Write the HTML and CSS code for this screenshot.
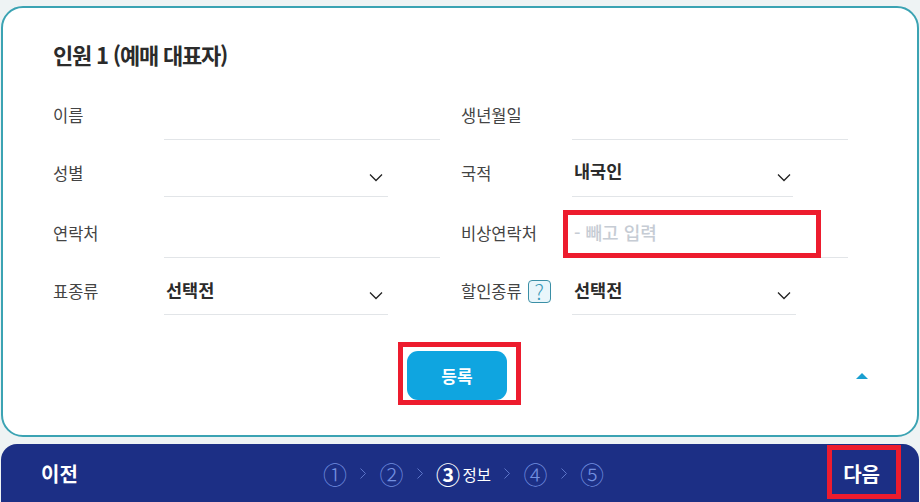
FILE: index.html
```html
<!DOCTYPE html>
<html lang="ko">
    <head>
        <meta charset="utf-8">
        <title>인원 정보</title>
        <link rel="stylesheet" href="styles.css">
    </head>
    <body>
        <div class="page">
            <div class="card">
                <h2 class="card-title">인원 1 (예매 대표자)</h2>

                <div class="row row-first">
                    <div class="cell">
                        <span class="label">이름</span>
                        <div class="field"></div>
                    </div>
                    <div class="cell">
                        <span class="label">생년월일</span>
                        <div class="field"></div>
                    </div>
                </div>

                <div class="row">
                    <div class="cell">
                        <span class="label">성별</span>
                        <div class="field select select-a">
                            <svg class="chevron" viewBox="0 0 14 9"><path d="M1 1.5l6 6 6-6"/></svg>
                        </div>
                    </div>
                    <div class="cell">
                        <span class="label">국적</span>
                        <div class="field select select-b">
                            <span class="value">내국인</span>
                            <svg class="chevron" viewBox="0 0 14 9"><path d="M1 1.5l6 6 6-6"/></svg>
                        </div>
                    </div>
                </div>

                <div class="row row-tall">
                    <div class="cell">
                        <span class="label">연락처</span>
                        <div class="field"></div>
                    </div>
                    <div class="cell">
                        <span class="label">비상연락처</span>
                        <div class="field"><span class="placeholder">- 빼고 입력</span></div>
                    </div>
                </div>

                <div class="row">
                    <div class="cell">
                        <span class="label">표종류</span>
                        <div class="field select select-a">
                            <span class="value">선택전</span>
                            <svg class="chevron" viewBox="0 0 14 9"><path d="M1 1.5l6 6 6-6"/></svg>
                        </div>
                    </div>
                    <div class="cell">
                        <span class="label">할인종류<span class="help">?</span></span>
                        <div class="field select select-c">
                            <span class="value">선택전</span>
                            <svg class="chevron" viewBox="0 0 14 9"><path d="M1 1.5l6 6 6-6"/></svg>
                        </div>
                    </div>
                </div>

                <div class="actions">
                    <button class="submit">등록</button>
                    <span class="collapse"></span>
                </div>
            </div>

            <div class="bar">
                <span class="bar-link">이전</span>
                <div class="steps">
                    <span class="step">①</span>
                    <svg class="sep" viewBox="0 0 6 11"><path d="M.5.5l5 5-5 5"/></svg>
                    <span class="step">②</span>
                    <svg class="sep" viewBox="0 0 6 11"><path d="M.5.5l5 5-5 5"/></svg>
                    <span class="step active">③</span>
                    <span class="step-name">정보</span>
                    <svg class="sep" viewBox="0 0 6 11"><path d="M.5.5l5 5-5 5"/></svg>
                    <span class="step">④</span>
                    <svg class="sep" viewBox="0 0 6 11"><path d="M.5.5l5 5-5 5"/></svg>
                    <span class="step">⑤</span>
                </div>
                <span class="bar-link">다음</span>
            </div>

            <div class="mark mark-phone"></div>
            <div class="mark mark-submit"></div>
            <div class="mark mark-next"></div>
        </div>
    </body>
</html>
```

FILE: styles.css
```css
* {
    margin: 0;
    padding: 0;
    box-sizing: border-box;
    font-family: "Noto Sans CJK KR", "Noto Sans", sans-serif;
}

body {
    background: #eef3f4;
    overflow: hidden;
}

.page {
    position: relative;
    width: 920px;
    height: 502px;
    padding: 6px 1px 0;
}

.card {
    height: 431px;
    padding: 28px 50px 0;
    background: white;
    border: 2px solid #3ba3b3;
    border-radius: 22px;
}

.card-title {
    height: 36px;
    margin-bottom: 11px;
    font-size: 22px;
    line-height: 36px;
    font-weight: 700;
    letter-spacing: -1.2px;
    color: #2b2b2b;
}

.row {
    display: flex;
    gap: 21px;
    height: 57px;
}

.row-tall {
    height: 61px;
}

.cell {
    display: flex;
    align-items: stretch;
    width: 387px;
}

.label {
    display: flex;
    align-items: center;
    align-self: flex-end;
    width: 111px;
    height: 24px;
    margin-bottom: 12px;
    font-size: 16.5px;
    color: #444;
}

.row-first .label {
    margin-bottom: 13px;
}

.row-tall .label {
    margin-bottom: 13px;
}

.help {
    display: flex;
    align-items: center;
    justify-content: center;
    flex: none;
    width: 23px;
    height: 23px;
    margin-left: 6px;
    font-size: 21px;
    font-weight: 300;
    color: #3a9ab8;
    background: #e9f6fb;
    border: 1px solid #3b8fa6;
    border-radius: 4px;
}

.field {
    position: relative;
    width: 276px;
    border-bottom: 1px solid #e2e5e8;
}

.select-a {
    width: 224px;
}

.select-b {
    width: 221px;
}

.select-c {
    width: 224px;
}

.value {
    position: absolute;
    left: 2px;
    bottom: 11px;
    font-size: 17.5px;
    line-height: 26px;
    font-weight: 700;
    color: #2b2b2b;
}

.select-b .value {
    bottom: 12px;
}

.placeholder {
    position: absolute;
    left: 2px;
    bottom: 12px;
    font-size: 18px;
    line-height: 26px;
    font-weight: 500;
    color: #c6ccd4;
}

.chevron {
    position: absolute;
    left: 205px;
    bottom: 14px;
    width: 14px;
    height: 9px;
    fill: none;
    stroke: #222;
    stroke-width: 1.3;
}

.actions {
    display: grid;
    grid-template-columns: 1fr auto 1fr;
    align-items: center;
    margin-top: 36px;
    padding-right: 6px;
}

.submit {
    grid-column: 2;
    width: 100px;
    height: 49px;
    border: none;
    border-radius: 11px;
    background: #0fa5e0;
    color: white;
    font-size: 17px;
    font-weight: 700;
}

.collapse {
    grid-column: 3;
    justify-self: end;
    margin-right: -7px;
    border-left: 6px solid transparent;
    border-right: 6px solid transparent;
    border-bottom: 6px solid #1a9fd0;
}

.bar {
    display: flex;
    align-items: center;
    justify-content: space-between;
    height: 59px;
    margin-top: 7px;
    padding: 0 39px 0 40px;
    background: #1c2f85;
    border-radius: 16px 16px 0 0;
}

.bar-link {
    font-size: 20px;
    font-weight: 700;
    color: white;
}

.steps {
    display: flex;
    align-items: center;
    gap: 13.3px;
    margin-left: 6px;
    color: #7390e0;
}

.step {
    font-size: 24px;
    font-weight: 300;
    line-height: 30px;
}

.step.active {
    font-weight: 700;
    color: white;
}

.step-name {
    margin-left: -11px;
    font-size: 15.5px;
    color: white;
}

.sep {
    width: 6px;
    height: 11px;
    fill: none;
    stroke: #5c74c8;
    stroke-width: 1;
}

.mark {
    position: absolute;
    border: 5px solid #ed1c2e;
}

.mark-phone {
    left: 563px;
    top: 210px;
    width: 258px;
    height: 48px;
}

.mark-submit {
    left: 398px;
    top: 342px;
    width: 123px;
    height: 63px;
}

.mark-next {
    left: 827px;
    top: 445px;
    width: 74px;
    height: 54px;
}
```
